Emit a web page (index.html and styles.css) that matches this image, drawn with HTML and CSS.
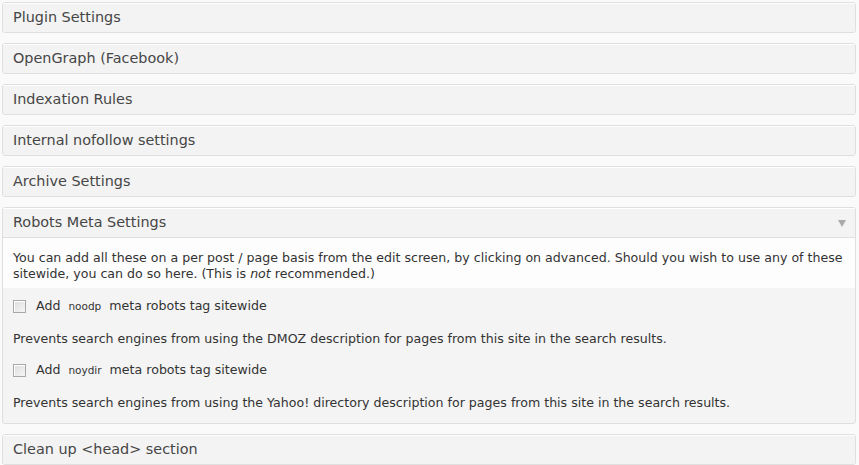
FILE: index.html
```html
<!DOCTYPE html>
<html lang="en">
<head>
    <title>SEO Settings</title>
    <meta charset="UTF-8">
    <link rel="stylesheet" href="styles.css">
</head>
<body>
    <div class="settings">
        <div class="postbox closed"><h3 class="hndle">Plugin Settings</h3></div>
        <div class="postbox closed"><h3 class="hndle">OpenGraph (Facebook)</h3></div>
        <div class="postbox closed"><h3 class="hndle">Indexation Rules</h3></div>
        <div class="postbox closed"><h3 class="hndle">Internal nofollow settings</h3></div>
        <div class="postbox closed"><h3 class="hndle">Archive Settings</h3></div>

        <div class="postbox">
            <h3 class="hndle">Robots Meta Settings <span class="toggle"></span></h3>
            <p class="intro">You can add all these on a per post / page basis from the edit screen, by clicking on advanced. Should you wish to use any of these sitewide, you can do so here. (This is <em>not</em> recommended.)</p>
            <div class="options">
                <label class="option-label"><input type="checkbox" class="checkbox"><span>Add <code>noodp</code> meta robots tag sitewide</span></label>
                <p class="option-desc">Prevents search engines from using the DMOZ description for pages from this site in the search results.</p>
                <label class="option-label"><input type="checkbox" class="checkbox"><span>Add <code>noydir</code> meta robots tag sitewide</span></label>
                <p class="option-desc">Prevents search engines from using the Yahoo! directory description for pages from this site in the search results.</p>
            </div>
        </div>

        <div class="postbox closed"><h3 class="hndle">Clean up &lt;head&gt; section</h3></div>
    </div>
</body>
</html>
```

FILE: styles.css
```css
* {
    margin: 0;
    padding: 0;
    box-sizing: border-box;
}

body {
    background: #fafafa;
    font-family: "DejaVu Sans", Verdana, sans-serif;
    color: #333;
}

.settings {
    padding: 2px 3px 0 2px;
}

.postbox {
    border: 1px solid #dfdfdf;
    border-radius: 3px;
    background: #f4f4f4;
    margin-bottom: 10px;
    overflow: hidden;
}

.hndle {
    position: relative;
    height: 29px;
    line-height: 29px;
    padding: 0 10px;
    font-size: 14.4px;
    font-weight: normal;
    color: #464646;
    background: #f3f3f3;
    box-shadow: inset 0 1px 0 #fff;
}

.postbox:not(.closed) .hndle {
    border-bottom: 1px solid #dfdfdf;
    height: 30px;
}

.toggle {
    position: absolute;
    top: 12px;
    right: 9px;
    width: 0;
    height: 0;
    border-left: 4px solid transparent;
    border-right: 4px solid transparent;
    border-top: 7px solid #aaa;
}

.intro {
    background: #fdfdfd;
    padding: 12px 10px 6px;
    font-size: 12.6px;
    line-height: 16px;
}

.options {
    padding: 10px 10px 12px;
    font-size: 12.6px;
    line-height: 16px;
}

.option-label {
    display: flex;
    align-items: center;
}

.checkbox {
    appearance: none;
    flex: none;
    width: 13px;
    height: 13px;
    margin-right: 10px;
    border: 1px solid #a8a8a8;
    background: linear-gradient(135deg, #dcdcdc 0%, #f6f6f6 100%);
    box-shadow: inset 1px 1px 0 #fff;
}

code {
    font-family: "DejaVu Sans", Verdana, sans-serif;
    font-size: 10.5px;
    padding: 0 4px;
}

.option-desc {
    margin: 17px 0 15px;
}

.option-desc:last-child {
    margin-bottom: 0;
}
```
